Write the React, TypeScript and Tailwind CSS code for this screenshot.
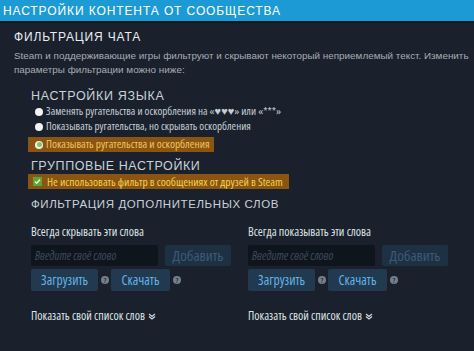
import React from "react";

const narrow = "font-['Open_Sans',sans-serif] font-stretch-[75%] whitespace-nowrap";

function Radio({ checked }: { checked?: boolean }) {
  return (
    <span className="inline-flex h-[8px] w-[8px] shrink-0 items-center justify-center rounded-full bg-[#f2f2f2]">
      {checked && <span className="h-[5px] w-[5px] rounded-full bg-[#8fc15a]" />}
    </span>
  );
}

function Help() {
  return (
    <span className="flex h-[8px] w-[8px] items-center justify-center rounded-full bg-[#73808c] text-[7px] font-bold leading-none text-[#2a3440]">
      ?
    </span>
  );
}

function WordList({ title }: { title: string }) {
  return (
    <div className={`flex flex-col ${narrow}`}>
      <div className="h-[14px] text-[12px] leading-[14px] text-[#dfe3e6]">{title}</div>
      <div className="mt-[6px] flex items-center gap-[7px]">
        <div className="flex h-[21px] w-[127px] items-center rounded-[2px] bg-[#0f151d] px-[4px] text-[12px] italic text-[#3c4b5a]">
          Введите своё слово
        </div>
        <div className="flex h-[21px] w-[66px] items-center justify-center rounded-[2px] bg-[#1e3142] text-[15px] text-[#3a5b78]">
          Добавить
        </div>
      </div>
      <div className="mt-[3px] flex items-center">
        <div className="flex h-[22px] w-[67px] items-center justify-center rounded-[2px] bg-[#223a4f] text-[13.5px] text-[#63b3e6]">
          Загрузить
        </div>
        <span className="ml-[3px] mr-[2px]"><Help /></span>
        <div className="flex h-[22px] w-[59px] items-center justify-center rounded-[2px] bg-[#223a4f] text-[13.5px] text-[#63b3e6]">
          Скачать
        </div>
        <span className="ml-[3px]"><Help /></span>
      </div>
      <div className="mt-[18px] flex h-[14px] items-center gap-[3px] text-[12px] leading-[14px] text-[#dfe3e6]">
        Показать свой список слов
        <svg width="8" height="7" viewBox="0 0 8 7" fill="none" stroke="#c9d2da" strokeWidth="1.3">
          <path d="M1 1l3 2.5L7 1M1 3.5L4 6l3-2.5" />
        </svg>
      </div>
    </div>
  );
}

export default function App() {
  return (
    <div className="h-[351px] w-[474px] overflow-hidden bg-[#1a212c] font-['Liberation_Sans',Arial,sans-serif]">
      {/* Header */}
      <div className="flex h-[21px] items-center bg-[#1b9ad6] pl-[3px] text-[12px] tracking-[0.9px] text-white">
        НАСТРОЙКИ КОНТЕНТА ОТ СООБЩЕСТВА
      </div>
      <div className="h-[2px] bg-[#11161d]" />

      <div className="px-[14px] pt-[6px]">
        <div className="text-[12px] leading-[16px] tracking-[0.85px] text-[#e9edf1]">ФИЛЬТРАЦИЯ ЧАТА</div>
        <p className="mt-[4px] whitespace-nowrap text-[9.9px] leading-[14px] text-[#a6adb5]">
          Steam и поддерживающие игры фильтруют и скрывают некоторый неприемлемый текст. Изменить
          <br />
          параметры фильтрации можно ниже:
        </p>

        <div className="pl-[17px]">
          <div className="mt-[11px] text-[12.5px] leading-[16px] tracking-[0.7px] text-[#c9d1d9]">НАСТРОЙКИ ЯЗЫКА</div>
          <div className={`flex flex-col text-[11px] ${narrow}`}>
            <div className="flex h-[15px] items-center gap-[3px] pl-[4px] text-[#c5ced6]">
              <Radio />
              Заменять ругательства и оскорбления на «♥♥♥» или «***»
            </div>
            <div className="flex h-[15px] items-center gap-[3px] pl-[4px] text-[#c5ced6]">
              <Radio />
              Показывать ругательства, но скрывать оскорбления
            </div>
            <div className="-ml-[3px] mt-[3px] flex h-[15px] w-[186px] items-center gap-[3px] bg-[#8a5512] pl-[7px] text-[11.3px] text-[#f0c45e]">
              <Radio checked />
              Показывать ругательства и оскорбления
            </div>
          </div>

          <div className="mt-[6px] text-[12.5px] leading-[16px] tracking-[0.6px] text-[#c9d1d9]">ГРУППОВЫЕ НАСТРОЙКИ</div>
          <div className={`-ml-[3px] flex h-[15px] w-[261px] items-center gap-[5px] bg-[#8a5512] pl-[5px] text-[11.5px] font-medium text-[#f5d04a] ${narrow}`}>
            <span className="flex h-[9px] w-[9px] items-center justify-center bg-[#5ea43a]">
              <svg width="7" height="7" viewBox="0 0 7 7" fill="none" stroke="#eaf6d8" strokeWidth="1.4">
                <path d="M1 3.6l1.7 1.7L6 1.5" />
              </svg>
            </span>
            Не использовать фильтр в сообщениях от друзей в Steam
          </div>

          <div className="mt-[7px] text-[11.5px] leading-[16px] tracking-[0.6px] text-[#c9d1d9]">
            ФИЛЬТРАЦИЯ ДОПОЛНИТЕЛЬНЫХ СЛОВ
          </div>

          <div className="mt-[13px] grid grid-cols-[217px_1fr]">
            <WordList title="Всегда скрывать эти слова" />
            <WordList title="Всегда показывать эти слова" />
          </div>
        </div>
      </div>
    </div>
  );
}
